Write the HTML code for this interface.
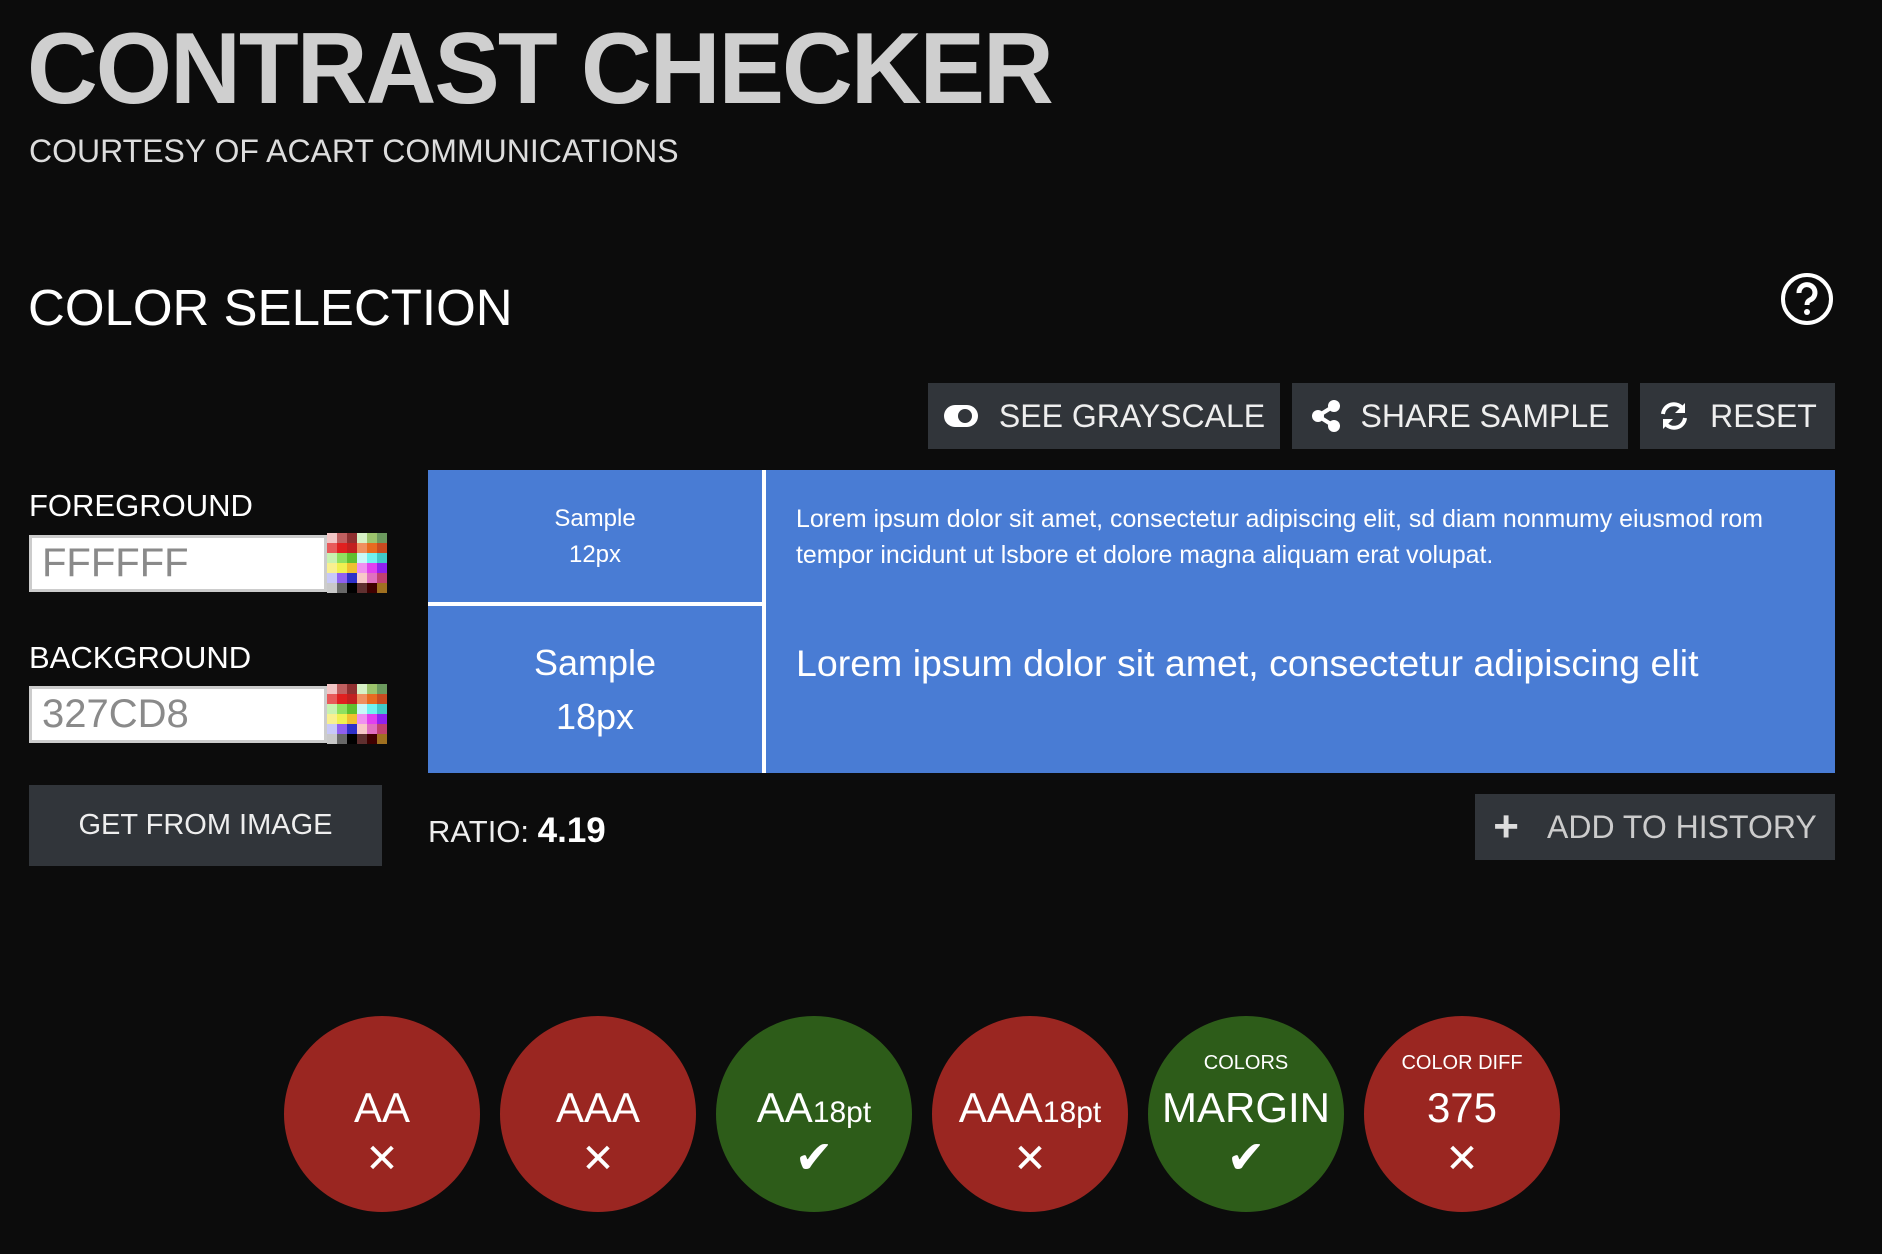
<!DOCTYPE html>
<html><head><meta charset="utf-8"><style>
*{margin:0;padding:0;box-sizing:border-box}
body{width:1882px;height:1254px;background:#0c0c0c;font-family:"Liberation Sans",sans-serif;position:relative;overflow:hidden;color:#fff}
.a{position:absolute;white-space:nowrap}
h1{position:absolute;left:27px;top:12px;font-size:101px;font-weight:bold;color:#cfcfcf;letter-spacing:-2px;transform:scaleX(0.97);transform-origin:left}
.btn{position:absolute;background:#31353a;color:#eee;font-size:32px;display:flex;align-items:center;justify-content:center;gap:20px}
.inp{position:absolute;left:29px;width:298px;height:57px;background:#fff;border:3px solid #ccc;color:#8a8a8a;font-size:40px;padding-left:10px;line-height:51px}
.pal{position:absolute;left:327px;width:60px;height:60px;display:grid;grid-template-columns:repeat(6,10px);grid-auto-rows:10px}
.pal i{display:block}
.c{position:absolute;width:196px;height:196px;border-radius:50%;top:1016px;text-align:center;color:#fff}
.r{background:#9a2621}.g{background:#2d5c19}
.c .t{position:absolute;left:0;right:0;top:68px;font-size:42px}
.c .t small{font-size:30px}
.c .m{position:absolute;left:0;right:0;top:120px;font-size:40px}
.c .s{position:absolute;left:0;right:0;top:36px;font-size:20px}
</style></head><body>
<h1>CONTRAST CHECKER</h1>
<div class="a" style="left:29px;top:133px;font-size:32px;color:#ddd">COURTESY OF ACART COMMUNICATIONS</div>
<div class="a" style="left:28px;top:278px;font-size:51px;color:#fff">COLOR SELECTION</div>
<svg class="a" style="left:1780px;top:272px" width="54" height="54" viewBox="0 0 54 54"><circle cx="27" cy="27" r="24" fill="none" stroke="#fff" stroke-width="4"/><path d="M19 21a8 8 0 1 1 11 7c-2 1-3 2-3 5" fill="none" stroke="#fff" stroke-width="5"/><circle cx="27" cy="40" r="3" fill="#fff"/></svg>

<div class="btn" style="left:928px;top:383px;width:352px;height:66px"><svg width="36" height="24"><rect x="1" y="1" width="34" height="22" rx="11" fill="#fff"/><circle cx="22" cy="12" r="7" fill="#31353a"/></svg>SEE GRAYSCALE</div>
<div class="btn" style="left:1292px;top:383px;width:336px;height:66px"><svg width="30" height="32"><circle cx="7" cy="16" r="6" fill="#fff"/><circle cx="23" cy="6" r="6" fill="#fff"/><circle cx="23" cy="26" r="6" fill="#fff"/><path d="M7 16L23 6M7 16L23 26" stroke="#fff" stroke-width="4"/></svg>SHARE SAMPLE</div>
<div class="btn" style="left:1640px;top:383px;width:195px;height:66px"><svg width="32" height="32" viewBox="0 0 32 32"><path d="M5 14A11 11 0 0 1 25 9M27 18A11 11 0 0 1 7 23" fill="none" stroke="#fff" stroke-width="4"/><path d="M27 3v10h-10z M5 29V19h10z" fill="#fff"/></svg>RESET</div>

<div class="a" style="left:29px;top:488px;font-size:31px">FOREGROUND</div>
<div class="inp" style="top:535px">FFFFFF</div>
<div class="pal" style="top:533px">
<i style="background:#f2c6c6"></i><i style="background:#c06060"></i><i style="background:#8f3030"></i><i style="background:#d7f2c6"></i><i style="background:#9cc46c"></i><i style="background:#6c9a5e"></i>
<i style="background:#e85a5a"></i><i style="background:#e02020"></i><i style="background:#c22020"></i><i style="background:#f09060"></i><i style="background:#e86a20"></i><i style="background:#c84a20"></i>
<i style="background:#c8f2b0"></i><i style="background:#90e060"></i><i style="background:#60c030"></i><i style="background:#c8f8f8"></i><i style="background:#70f0f0"></i><i style="background:#40c8c8"></i>
<i style="background:#f8f090"></i><i style="background:#f0f050"></i><i style="background:#f0c030"></i><i style="background:#f090f0"></i><i style="background:#e040f0"></i><i style="background:#9020f0"></i>
<i style="background:#c8c8f8"></i><i style="background:#9060f0"></i><i style="background:#3030c8"></i><i style="background:#f8c8c8"></i><i style="background:#e070c0"></i><i style="background:#c04070"></i>
<i style="background:#c8c8c8"></i><i style="background:#686868"></i><i style="background:#000"></i><i style="background:#603030"></i><i style="background:#400000"></i><i style="background:#a07020"></i>
</div>
<div class="a" style="left:29px;top:640px;font-size:31px">BACKGROUND</div>
<div class="inp" style="top:686px">327CD8</div>
<div class="pal" style="top:684px">
<i style="background:#f2c6c6"></i><i style="background:#c06060"></i><i style="background:#8f3030"></i><i style="background:#d7f2c6"></i><i style="background:#9cc46c"></i><i style="background:#6c9a5e"></i>
<i style="background:#e85a5a"></i><i style="background:#e02020"></i><i style="background:#c22020"></i><i style="background:#f09060"></i><i style="background:#e86a20"></i><i style="background:#c84a20"></i>
<i style="background:#c8f2b0"></i><i style="background:#90e060"></i><i style="background:#60c030"></i><i style="background:#c8f8f8"></i><i style="background:#70f0f0"></i><i style="background:#40c8c8"></i>
<i style="background:#f8f090"></i><i style="background:#f0f050"></i><i style="background:#f0c030"></i><i style="background:#f090f0"></i><i style="background:#e040f0"></i><i style="background:#9020f0"></i>
<i style="background:#c8c8f8"></i><i style="background:#9060f0"></i><i style="background:#3030c8"></i><i style="background:#f8c8c8"></i><i style="background:#e070c0"></i><i style="background:#c04070"></i>
<i style="background:#c8c8c8"></i><i style="background:#686868"></i><i style="background:#000"></i><i style="background:#603030"></i><i style="background:#400000"></i><i style="background:#a07020"></i>
</div>
<div class="btn" style="left:29px;top:785px;width:353px;height:81px;font-size:29px">GET FROM IMAGE</div>

<div class="a" style="left:428px;top:470px;width:1407px;height:303px;background:#497cd4"></div>
<div class="a" style="left:762px;top:470px;width:4px;height:303px;background:#fff"></div>
<div class="a" style="left:428px;top:602px;width:336px;height:4px;background:#fff"></div>
<div class="a" style="left:428px;top:501px;width:334px;text-align:center;font-size:24px;line-height:36px">Sample<br>12px</div>
<div class="a" style="left:428px;top:636px;width:334px;text-align:center;font-size:36px;line-height:54px">Sample<br>18px</div>
<div class="a" style="left:796px;top:501px;font-size:24.9px;line-height:36px">Lorem ipsum dolor sit amet, consectetur adipiscing elit, sd diam nonmumy eiusmod rom<br>tempor incidunt ut lsbore et dolore magna aliquam erat volupat.</div>
<div class="a" style="left:796px;top:636px;font-size:37.5px;line-height:54px">Lorem ipsum dolor sit amet, consectetur adipiscing elit</div>

<div class="a" style="left:428px;top:811px;font-size:31px;color:#eee">RATIO: <b style="font-size:35px;color:#fff">4.19</b></div>
<div class="btn" style="left:1475px;top:794px;width:360px;height:66px;color:#ccc;font-size:32px;gap:28px"><span style="font-size:44px;font-weight:bold;color:#ddd">+</span>ADD TO HISTORY</div>

<div class="c r" style="left:284px"><div class="t">AA</div><div class="m">✕</div></div>
<div class="c r" style="left:500px"><div class="t">AAA</div><div class="m">✕</div></div>
<div class="c g" style="left:716px"><div class="t">AA<small>18pt</small></div><div class="m" style="font-size:46px;top:114px">✔</div></div>
<div class="c r" style="left:932px"><div class="t">AAA<small>18pt</small></div><div class="m">✕</div></div>
<div class="c g" style="left:1148px"><div class="s">COLORS</div><div class="t">MARGIN</div><div class="m" style="font-size:46px;top:114px">✔</div></div>
<div class="c r" style="left:1364px"><div class="s">COLOR DIFF</div><div class="t">375</div><div class="m">✕</div></div>
</body></html>
